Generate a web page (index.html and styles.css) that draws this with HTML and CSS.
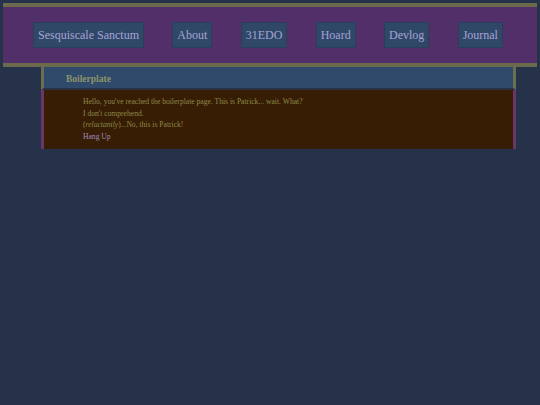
FILE: index.html
```html
<!DOCTYPE html>
<html>
<head>
<meta charset="utf-8">
<link rel="stylesheet" href="styles.css">
</head>
<body>
<header class="site-header">
  <nav class="nav">
    <a class="nav-item" href="#">Sesquiscale Sanctum</a>
    <a class="nav-item" href="#">About</a>
    <a class="nav-item" href="#">31EDO</a>
    <a class="nav-item" href="#">Hoard</a>
    <a class="nav-item" href="#">Devlog</a>
    <a class="nav-item" href="#">Journal</a>
  </nav>
</header>
<section class="panel">
  <h2 class="panel-title">Boilerplate</h2>
  <div class="panel-body">
    <p class="line">Hello, you've reached the boilerplate page. This is Patrick... wait. What?</p>
    <p class="line">I don't comprehend.</p>
    <p class="line">(<em>reluctantly</em>)...No, this is Patrick!</p>
    <p class="line"><a class="link" href="#">Hang Up</a></p>
  </div>
</section>
</body>
</html>
```
FILE: styles.css
```css
html, body {
  background: #25324a;
}
body {
  margin: 3px;
  font-family: "Liberation Serif", "Times New Roman", serif;
}
.site-header {
  background: #532f6a;
  border-top: 4px solid #6b6a4c;
  border-bottom: 4px solid #6b6a4c;
}
.nav {
  display: flex;
  align-items: center;
  justify-content: space-between;
  height: 56px;
  padding: 0 34px 0 30px;
}
.nav-item {
  display: block;
  flex-shrink: 0;
  white-space: nowrap;
  background: #2f4868;
  border: 1px solid #2b3e5c;
  color: #a7a3d6;
  font-size: 12px;
  line-height: 14px;
  padding: 5px 4px;
  text-decoration: none;
}
.panel {
  margin-left: 38px;
  width: 475px;
}
.panel-title {
  margin: 0;
  background: #2f4a6b;
  border-left: 3px solid #6b6e50;
  border-right: 3px solid #6b6e50;
  border-bottom: 2px solid #2a3142;
  color: #8e9468;
  font-size: 9.5px;
  font-weight: bold;
  height: 23px;
  line-height: 21px;
  padding: 2px 0 0 22px;
  box-sizing: border-box;
}
.panel-body {
  background: #361d04;
  border-left: 3px solid #693668;
  border-right: 3px solid #693668;
  padding: 6px 0 7px 39px;
}
.line {
  margin: 0;
  color: #8e8a4a;
  font-size: 7.6px;
  line-height: 11.5px;
}
.link {
  color: #a48bbd;
  text-decoration: none;
}
```
